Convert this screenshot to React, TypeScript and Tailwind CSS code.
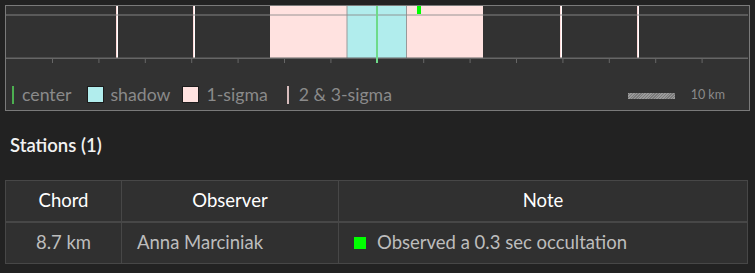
import React from 'react';

const ticks = Array.from({ length: 15 }, (_, i) => 52 + i * 46.4);
const sigmaLines = [116, 193, 560, 637];

// chart is drawn in page coordinates, shifted by the box interior offset
const OX = 6;
const OY = 6;

const ChordChart: React.FC = () => (
  <svg width={742} height={58} className="block">
    <g transform={`translate(${-OX} ${-OY})`}>
      <rect x={270} y={6} width={213} height={52} fill="#ffe2e0" />
      <rect x={347} y={6} width={60} height={52} fill="#b1eded" />
      <rect x={346.5} y={6} width={1} height={52} fill="#999" />
      <rect x={406} y={6} width={1} height={52} fill="#999" />
      {sigmaLines.map((x) => (
        <g key={x}>
          <rect x={x} y={6} width={1} height={52} fill="#ffd8d8" />
          <rect x={x + 1} y={6} width={1} height={52} fill="#ffffff" />
        </g>
      ))}
      <rect x={6} y={14} width={742} height={2} fill="rgba(140,140,140,0.45)" />
      <rect x={6} y={57.5} width={742} height={1.5} fill="#666" />
      {ticks.map((x) => (
        <rect key={x} x={x} y={58} width={1} height={5} fill="#666" />
      ))}
      <rect x={376} y={6} width={2} height={57} fill="#6edb8a" />
      <rect x={417} y={6} width={4} height={8} fill="#00ff00" />
    </g>
  </svg>
);

const App: React.FC = () => {
  return (
    <div
      className="w-[755px] h-[273px] bg-[#222222] p-[5px] text-[18.5px]"
      style={{ fontFamily: 'Lato, "Open Sans", sans-serif' }}
    >
      <div className="border border-[#7a7a7a] bg-[#323232] h-[106px] flex flex-col">
        <ChordChart />
        <div className="flex items-center h-[46px] pt-[15px] pl-[6px] pr-[24px] text-[17.7px] text-[#8a8a8a]">
          <span className="w-[2px] h-[18px] bg-[#4caf50]" />
          <span className="ml-[8px] leading-none">center</span>
          <span className="ml-[16px] w-[17px] h-[17px] bg-[#b1eded] border border-[#1c1c1c]" />
          <span className="ml-[6px] leading-none">shadow</span>
          <span className="ml-[12px] w-[17px] h-[17px] bg-[#ffe2e0] border border-[#1c1c1c]" />
          <span className="ml-[7px] leading-none">1-sigma</span>
          <span className="ml-[19px] w-[2px] h-[18px] bg-[#d6bcbc]" />
          <span className="ml-[10px] leading-none">2 &amp; 3-sigma</span>
          <span className="ml-auto w-[47px] h-[6px] mt-[2px] bg-[repeating-linear-gradient(135deg,#9a9a9a_0px,#9a9a9a_1px,#7a7a7a_1px,#7a7a7a_2px)]" />
          <span className="ml-[16px] text-[12.5px] mt-[2px] leading-none">10 km</span>
        </div>
      </div>

      <div className="pl-[5px] pt-[22px] pb-[23px] text-[#f2f2f2] font-semibold leading-[24px]">
        Stations (1)
      </div>

      <table className="w-[743px] border-collapse bg-[#303030] table-fixed">
        <colgroup>
          <col className="w-[116px]" />
          <col className="w-[217px]" />
          <col />
        </colgroup>
        <thead>
          <tr className="h-[41px] text-white border-b-2 border-[#474747]">
            <th className="border border-[#474747] font-normal text-center">Chord</th>
            <th className="border border-[#474747] font-normal text-center">Observer</th>
            <th className="border border-[#474747] font-normal text-center">Note</th>
          </tr>
        </thead>
        <tbody>
          <tr className="h-[42px] text-[#bdbdbd]">
            <td className="border border-[#474747] text-center">8.7 km</td>
            <td className="border border-[#474747] pl-[15px]">Anna Marciniak</td>
            <td className="border border-[#474747] pl-[15px]">
              <span className="inline-flex items-center">
                <span className="w-[12px] h-[12px] bg-[#00ff00] mr-[11px]" />
                Observed a 0.3 sec occultation
              </span>
            </td>
          </tr>
        </tbody>
      </table>
    </div>
  );
};

export default App;
